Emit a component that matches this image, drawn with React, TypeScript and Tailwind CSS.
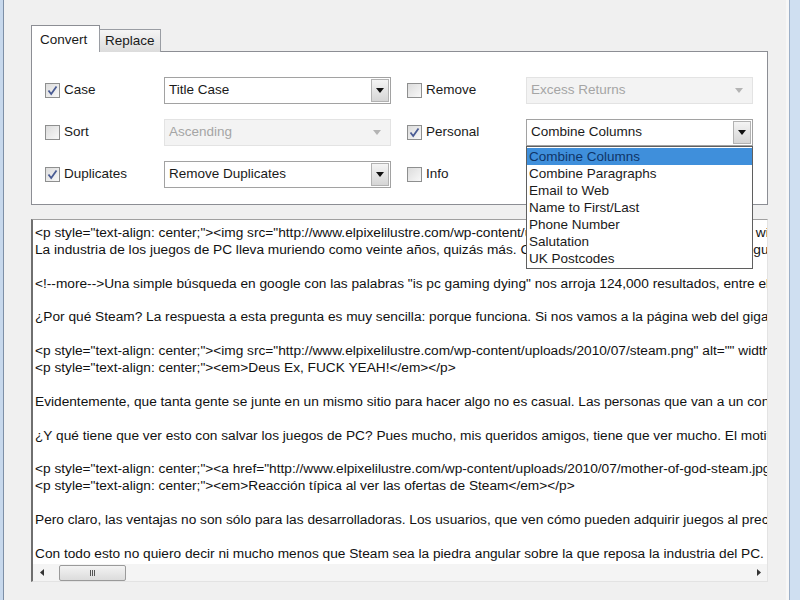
import React from "react";

const lines = [
  '<p style="text-align: center;"><img src="http://www.elpixelilustre.com/wp-content/uploads/2010/07/pcgaming.jpg" alt="" width="500" height="300" />',
  "La industria de los juegos de PC lleva muriendo como veinte años, quizás más. Cada año aparece un artículo que asegura que el fin está cerca.",
  "",
  '<!--more-->Una simple búsqueda en google con las palabras "is pc gaming dying" nos arroja 124,000 resultados, entre ellos algunos muy curiosos.',
  "",
  "¿Por qué Steam? La respuesta a esta pregunta es muy sencilla: porque funciona. Si nos vamos a la página web del gigante de la distribución digital",
  "",
  '<p style="text-align: center;"><img src="http://www.elpixelilustre.com/wp-content/uploads/2010/07/steam.png" alt="" width="500" />',
  '<p style="text-align: center;"><em>Deus Ex, FUCK YEAH!</em></p>',
  "",
  "Evidentemente, que tanta gente se junte en un mismo sitio para hacer algo no es casual. Las personas que van a un concierto lo hacen por algo.",
  "",
  "¿Y qué tiene que ver esto con salvar los juegos de PC? Pues mucho, mis queridos amigos, tiene que ver mucho. El motivo es muy simple.",
  "",
  '<p style="text-align: center;"><a href="http://www.elpixelilustre.com/wp-content/uploads/2010/07/mother-of-god-steam.jpg">',
  '<p style="text-align: center;"><em>Reacción típica al ver las ofertas de Steam</em></p>',
  "",
  "Pero claro, las ventajas no son sólo para las desarrolladoras. Los usuarios, que ven cómo pueden adquirir juegos al precio de una pizza",
  "",
  "Con todo esto no quiero decir ni mucho menos que Steam sea la piedra angular sobre la que reposa la industria del PC.",
];

const personalOptions = [
  "Combine Columns",
  "Combine Paragraphs",
  "Email to Web",
  "Name to First/Last",
  "Phone Number",
  "Salutation",
  "UK Postcodes",
];

function Check({ label, checked }: { label: string; checked?: boolean }) {
  return (
    <label className="flex w-[119px] items-center gap-[4px]">
      <span className="flex h-[15px] w-[15px] items-center justify-center border border-[#8e8f8f] bg-gradient-to-br from-[#dcdcdc] to-[#f8f8f8]">
        {checked && (
          <svg width="11" height="11" viewBox="0 0 11 11">
            <path d="M1.5 5.5 L4.2 9 L9.5 1.5" fill="none" stroke="#4a5c94" strokeWidth="1.8" />
          </svg>
        )}
      </span>
      <span>{label}</span>
    </label>
  );
}

function Arrow({ color }: { color: string }) {
  return (
    <svg width="8" height="5" viewBox="0 0 8 5">
      <path d="M0 0 H8 L4 5 Z" fill={color} />
    </svg>
  );
}

function Select({ value, disabled }: { value: string; disabled?: boolean }) {
  if (disabled) {
    return (
      <div className="flex h-[27px] w-[227px] items-center justify-between border border-[#e3e3e3] bg-[#f3f3f3] pl-[4px] pr-[9px] text-[#a5a5a5]">
        <span>{value}</span>
        <Arrow color="#b4b4b4" />
      </div>
    );
  }
  return (
    <div className="flex h-[27px] w-[227px] items-center justify-between border border-[#a2a2a2] bg-white pl-[4px] pr-[1px]">
      <span>{value}</span>
      <span className="flex h-[23px] w-[18px] items-center justify-center border border-[#b2b2b2] bg-gradient-to-b from-[#f4f4f4] to-[#d6d6d6]">
        <Arrow color="#111" />
      </span>
    </div>
  );
}

export default function App() {
  return (
    <div
      className="flex h-[600px] w-[800px] overflow-hidden bg-[#f0f0f0] text-[13.5px] text-[#1a1a1a]"
      style={{ fontFamily: '"Liberation Sans", Arial, sans-serif' }}
    >
      <div className="flex w-[4px] shrink-0">
        <div className="w-[3px] bg-[#c7d8ec]" />
        <div className="w-px bg-[#7d8fa6]" />
      </div>

      <div className="w-[764px] shrink-0 pl-[27px] pt-[25px]">
        {/* tabs */}
        <div className="relative z-10 -mb-px flex h-[27px] items-end">
          <div className="flex h-[27px] w-[69px] items-start border border-b-0 border-[#8c8e94] bg-white pl-[8px] pt-[4px]">
            Convert
          </div>
          <div className="-ml-px flex h-[23px] w-[62px] items-center border border-b-0 border-[#9a9da3] bg-gradient-to-b from-[#f5f5f5] to-[#dcdcdc] pl-[5px]">
            Replace
          </div>
        </div>

        <div className="flex h-[154px] w-[737px] flex-col gap-[15px] border border-[#8c8e94] bg-white pl-[13px] pt-[25px]">
          <div className="flex items-center">
            <Check label="Case" checked />
            <Select value="Title Case" />
            <div className="w-[16px]" />
            <Check label="Remove" />
            <Select value="Excess Returns" disabled />
          </div>
          <div className="flex items-center">
            <Check label="Sort" />
            <Select value="Ascending" disabled />
            <div className="w-[16px]" />
            <Check label="Personal" checked />
            <div className="relative">
              <Select value="Combine Columns" />
              <ul className="absolute left-0 top-full z-20 w-[227px] border border-[#5f5f5f] bg-white py-px leading-[17px]">
                {personalOptions.map((o, i) => (
                  <li
                    key={o}
                    className={i === 0 ? "bg-[#3f8fdb] pl-[2px] text-[#0f3568]" : "pl-[2px]"}
                  >
                    {o}
                  </li>
                ))}
              </ul>
            </div>
          </div>
          <div className="flex items-center">
            <Check label="Duplicates" checked />
            <Select value="Remove Duplicates" />
            <div className="w-[16px]" />
            <Check label="Info" />
          </div>
        </div>

        {/* text area */}
        <div className="mt-[14px] flex h-[363px] w-[737px] flex-col border border-b-[#e3e3e3] border-l-2 border-l-[#6f6f6f] border-r-[#e3e3e3] border-t-[#a0a0a0] bg-white">
          <div className="flex-1 overflow-hidden whitespace-pre pl-[2px] pt-[5px] text-[13.7px] leading-[16.9px] text-[#111]">
            {lines.map((l, i) => (
              <div key={i} className="h-[16.9px]">
                {l}
              </div>
            ))}
          </div>
          <div className="flex h-[17px] items-center bg-[#f4f4f4]">
            <span className="flex w-[17px] justify-center">
              <svg width="4" height="7" viewBox="0 0 4 7">
                <path d="M4 0 V7 L0 3.5 Z" fill="#333" />
              </svg>
            </span>
            <div className="ml-[9px] flex h-[16px] w-[67px] items-center justify-center rounded-[2px] border border-[#9a9a9a] bg-gradient-to-b from-[#f3f3f3] to-[#dcdcdc]">
              <span className="flex gap-[1px]">
                <span className="h-[6px] w-px bg-[#555]" />
                <span className="h-[6px] w-px bg-[#555]" />
                <span className="h-[6px] w-px bg-[#555]" />
              </span>
            </div>
            <div className="flex-1" />
            <span className="flex w-[17px] justify-center">
              <svg width="4" height="7" viewBox="0 0 4 7">
                <path d="M0 0 V7 L4 3.5 Z" fill="#333" />
              </svg>
            </span>
          </div>
        </div>
      </div>

      <div className="flex flex-1">
        <div className="w-[18px] bg-[#f0f0f0]" />
        <div className="w-[3px] bg-[#f7f7f7]" />
        <div className="w-px bg-[#9db0c8]" />
        <div className="flex-1 bg-[#cfdff1]" />
      </div>
    </div>
  );
}
